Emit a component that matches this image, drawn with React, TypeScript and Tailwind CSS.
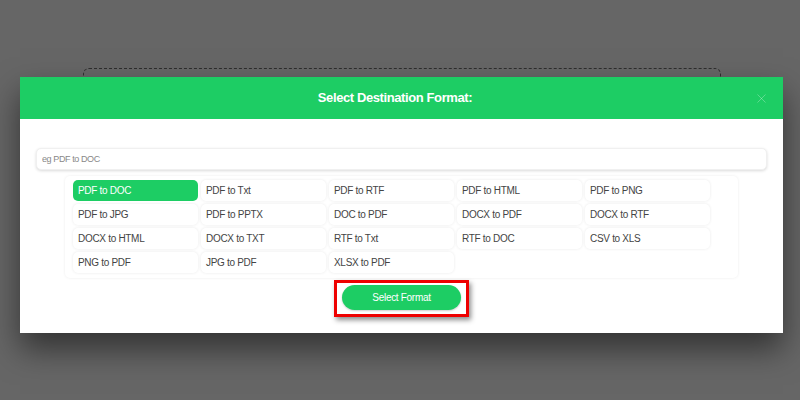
import { X } from "lucide-react";

// Conversion options, row by row as laid out in the dialog grid.
const FORMATS = [
  "PDF to DOC",
  "PDF to Txt",
  "PDF to RTF",
  "PDF to HTML",
  "PDF to PNG",
  "PDF to JPG",
  "PDF to PPTX",
  "DOC to PDF",
  "DOCX to PDF",
  "DOCX to RTF",
  "DOCX to HTML",
  "DOCX to TXT",
  "RTF to Txt",
  "RTF to DOC",
  "CSV to XLS",
  "PNG to PDF",
  "JPG to PDF",
  "XLSX to PDF",
];

function FormatOption({ label, active }: { label: string; active: boolean }) {
  return (
    <button
      className={`h-[21px] w-[125px] rounded-[5px] pl-[5px] text-left text-[10px] tracking-[-0.3px] ${
        active
          ? "bg-[#1dcd64] text-white"
          : "bg-white text-[#444] shadow-[0_0_3px_rgba(0,0,0,0.09)]"
      }`}
    >
      {label}
    </button>
  );
}

function Dialog() {
  return (
    <div className="flex h-[256px] w-[763px] flex-col overflow-hidden bg-white shadow-[0_16px_30px_rgba(0,0,0,0.5)]">
      <div className="flex h-[42px] items-center bg-[#1dcd64] pl-[16px] pr-[14px]">
        <h2 className="flex-1 text-center text-[13px] font-bold tracking-[-0.4px] text-white">
          Select Destination Format:
        </h2>
        <button className="text-white/45" aria-label="Close">
          <X size={15} strokeWidth={1} />
        </button>
      </div>

      <div className="flex flex-1 flex-col items-center px-[16px] pt-[29px]">
        <input
          placeholder="eg PDF to DOC"
          className="h-[22px] w-[731px] self-start rounded-[5px] border border-[#f0f0f0] bg-white px-[5px] text-[9px] tracking-[-0.4px] text-[#444] shadow-[0_1px_3px_rgba(0,0,0,0.15)] outline-none placeholder:text-[#888]"
        />

        <div className="mt-[6px] w-[673px] self-start ml-[29px] rounded-[5px] pb-[5px] pl-[8px] pt-[4px] shadow-[0_0_3px_rgba(0,0,0,0.08)]">
          <div className="grid grid-cols-[repeat(5,125px)] gap-x-[3px] gap-y-[3px]">
            {FORMATS.map((f, i) => (
              <FormatOption key={f} label={f} active={i === 0} />
            ))}
          </div>
        </div>

        <div className="mt-[2px] border-[3px] border-[#ee0000] px-[5px] pb-[4px] pt-[1px] shadow-[2px_3px_5px_rgba(0,0,0,0.45)]">
          <button className="h-[25px] w-[119px] rounded-full bg-[#1dcd64] text-[10px] tracking-[-0.3px] text-white shadow-[0_1px_2px_rgba(0,0,0,0.2)]">
            Select Format
          </button>
        </div>
      </div>
    </div>
  );
}

export default function App() {
  return (
    <div className="relative h-[400px] w-[800px] overflow-hidden bg-[#666666] font-['Liberation_Sans',Arial,sans-serif]">
      {/* upload drop area on the page behind the overlay */}
      <div className="ml-[83px] mt-[68px] h-[200px] w-[638px] rounded-[6px] border border-dashed border-[#2e2e2e]" />

      {/* modal sits over the page */}
      <div className="absolute left-[20px] top-[77px]">
        <Dialog />
      </div>
    </div>
  );
}
